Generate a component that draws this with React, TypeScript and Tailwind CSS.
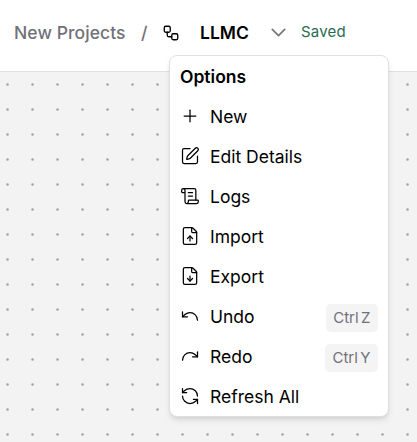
import {
  ChevronDown,
  FileDown,
  FileUp,
  Plus,
  Redo,
  RefreshCcw,
  ScrollText,
  SquarePen,
  Undo,
  Workflow,
  type LucideIcon,
} from "lucide-react";

type Item = { label: string; icon: LucideIcon; shortcut?: string };

const items: Item[] = [
  { label: "New", icon: Plus },
  { label: "Edit Details", icon: SquarePen },
  { label: "Logs", icon: ScrollText },
  { label: "Import", icon: FileUp },
  { label: "Export", icon: FileDown },
  { label: "Undo", icon: Undo, shortcut: "Z" },
  { label: "Redo", icon: Redo, shortcut: "Y" },
  { label: "Refresh All", icon: RefreshCcw },
];

function Header() {
  return (
    <header className="flex h-[72px] items-center whitespace-nowrap border-b border-[#e0e0e3] bg-white pb-[5px] pl-[14px]">
      <span className="w-[112px] text-[17.5px] font-medium tracking-[0.08px] text-[#71717a]">New Projects</span>
      <span className="ml-[15px] w-[7px] text-[17.5px] font-medium text-[#71717a]">/</span>
      <Workflow className="mb-px ml-[14px] size-[18px] shrink-0 text-black" strokeWidth={1.75} />
      <span className="ml-5 w-[50px] text-[17.5px] font-semibold text-black">LLMC</span>
      <ChevronDown className="mb-px ml-[16px] size-[25px] shrink-0 text-[#71717a]" strokeWidth={1.5} />
      <span className="ml-[10px] pb-[2px] text-[15px] tracking-[0.2px] text-[#2a6b51]">Saved</span>
    </header>
  );
}

function Menu() {
  return (
    <div className="absolute left-[169px] top-[55px] h-[362px] w-[220px] rounded-lg border border-[#e0e0e3] bg-white shadow-md">
      <div className="flex h-[41px] items-center px-[10px] pt-[2px] text-[17.5px] font-semibold text-black">Options</div>
      {items.map(({ label, icon: Icon, shortcut }) => (
        <div key={label} className="flex h-10 items-center px-[10px] text-[17.5px] text-black">
          <Icon className="mb-[1.5px] mr-[10px] size-5 shrink-0" strokeWidth={1.5} />
          <span>{label}</span>
          {shortcut && (
            <span className="ml-auto mt-[2px] flex h-7 items-center gap-[2.5px] rounded-[5px] bg-[#f4f4f5] px-[7.5px] text-[15px] text-[#71717a]">
              <span>Ctrl</span>
              <span>{shortcut}</span>
            </span>
          )}
        </div>
      ))}
    </div>
  );
}

export default function App() {
  return (
    <div className="relative flex h-[442px] w-[417px] flex-col overflow-hidden bg-white font-['Inter',sans-serif]">
      <Header />
      <main className="flex-1 bg-[#f3f3f3]">
        <svg className="block size-full">
          <defs>
            <pattern id="dots" width="25" height="25" x="-5" y="0" patternUnits="userSpaceOnUse">
              <circle cx="12.5" cy="12.5" r="1.25" fill="#a1a1aa" />
            </pattern>
          </defs>
          <rect width="100%" height="100%" fill="url(#dots)" />
        </svg>
      </main>
      <Menu />
    </div>
  );
}
